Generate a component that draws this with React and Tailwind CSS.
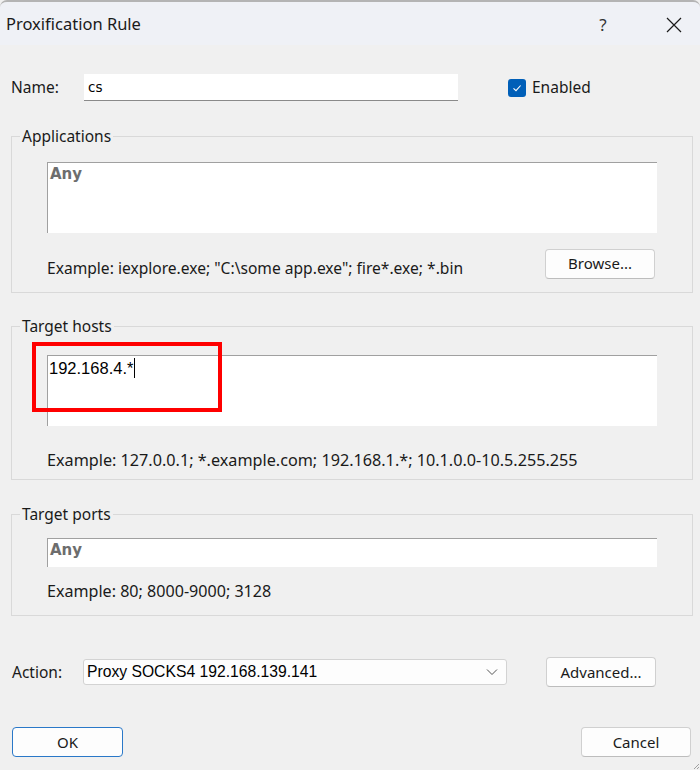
import React from "react";

const ui = { fontFamily: '"Noto Sans", "Open Sans", sans-serif' };
const field = { fontFamily: '"Liberation Sans", Arial, sans-serif' };
const anyF = { fontFamily: '"DejaVu Sans", Verdana, sans-serif' };

function Btn({ children, className = "", primary = false }) {
  return (
    <div
      className={
        "flex items-center justify-center rounded-[4px] bg-[#fdfdfd] text-[15px] text-[#1a1a1a] border " +
        (primary ? "border-[#2a78c8]" : "border-[#d0d0d0] border-b-[#bdbdbd]") +
        " " +
        className
      }
      style={ui}
    >
      {children}
    </div>
  );
}

function Group({ title, className = "", children }) {
  return (
    <fieldset className={"border border-[#d9d9d9] mx-[11px] px-0 " + className}>
      <legend
        className="ml-[8px] px-[2px] text-[15.5px] leading-[20px] text-[#1a1a1a]"
        style={ui}
      >
        {title}
      </legend>
      <div className="px-[35px]">{children}</div>
    </fieldset>
  );
}

function Sunken({ className = "", children }) {
  return (
    <div
      className={
        "bg-white border-t border-l border-t-[#a0a0a0] border-l-[#a0a0a0] " + className
      }
    >
      {children}
    </div>
  );
}

export default function App() {
  return (
    <div className="relative w-[700px] h-[770px] bg-[#f0f0f0] overflow-hidden" style={ui}>
      {/* Title bar */}
      <div className="h-[45px] bg-[#eff1f6] border-t-2 border-[#b4b4b4] rounded-t-[7px] flex items-center">
        <div className="pl-[6px] text-[16.5px] text-[#1a1a1a] flex-1 mt-[2px]" style={ui}>
          Proxification Rule
        </div>
        <div className="w-[20px] text-center text-[17px] text-[#333] mr-[53px] mt-[2px]" style={ui}>
          ?
        </div>
        <svg width="16" height="16" viewBox="0 0 16 16" className="mr-[18px] mt-[2px]">
          <path d="M1 1 L15 15 M15 1 L1 15" stroke="#1a1a1a" strokeWidth="1.2" fill="none" />
        </svg>
      </div>

      {/* Name row */}
      <div className="flex items-center mt-[29px] h-[27px]">
        <div className="pl-[11px] w-[84px] text-[15.5px] text-[#1a1a1a]">Name:</div>
        <div
          className="w-[374px] h-[27px] bg-white border-b border-[#8a8a8a] flex items-center pl-[4px] text-[13.5px] text-black"
          style={{ fontFamily: '"DejaVu Sans", Tahoma, sans-serif' }}
        >
          cs
        </div>
        <div className="ml-[50px] flex items-center gap-[6px]">
          <div className="w-[18px] h-[18px] rounded-[3px] bg-[#005fb8] flex items-center justify-center">
            <svg width="12" height="12" viewBox="0 0 12 12">
              <path d="M2.5 6.3 L5 8.6 L9.6 3.5" stroke="white" strokeWidth="1.1" fill="none" />
            </svg>
          </div>
          <div className="text-[15.5px] text-[#1a1a1a]">Enabled</div>
        </div>
      </div>

      {/* Applications */}
      <Group title="Applications" className="mt-[25px] h-[167px]">
        <Sunken className="mt-[16px] h-[71px] w-[610px]">
          <div className="pl-[2px] pt-[2px] text-[15px] font-bold text-[#6d6d6d] leading-[18px]" style={anyF}>
            Any
          </div>
        </Sunken>
        <div className="flex items-center justify-between mt-[14px]">
          <div className="text-[15.6px] text-[#1a1a1a] mt-[10px]">
            Example: iexplore.exe; "C:\some app.exe"; fire*.exe; *.bin
          </div>
          <Btn className="w-[110px] h-[30px] mr-[2px]">Browse...</Btn>
        </div>
      </Group>

      {/* Target hosts */}
      <Group title="Target hosts" className="mt-[23px] h-[164px]">
        <Sunken className="mt-[19px] h-[71px] w-[610px]">
          <div className="pl-[1px] pt-[2px] text-[16.5px] text-black leading-[20px] flex items-center" style={field}>
            192.168.4.*
            <span className="inline-block w-[1px] h-[20px] bg-black ml-[1px]" />
          </div>
        </Sunken>
        <div className="text-[16.2px] text-[#1a1a1a] mt-[22px]">
          Example: 127.0.0.1; *.example.com; 192.168.1.*; 10.1.0.0-10.5.255.255
        </div>
      </Group>

      {/* Target ports */}
      <Group title="Target ports" className="mt-[24px] h-[112px]">
        <Sunken className="mt-[14px] h-[29px] w-[610px]">
          <div className="pl-[2px] pt-[2px] text-[15px] font-bold text-[#6d6d6d] leading-[18px]" style={anyF}>
            Any
          </div>
        </Sunken>
        <div className="text-[16.1px] text-[#1a1a1a] mt-[12px]">Example: 80; 8000-9000; 3128</div>
      </Group>

      {/* Action row */}
      <div className="flex items-center mt-[41px] h-[30px]">
        <div className="pl-[12px] w-[83px] text-[15.5px] text-[#1a1a1a] mt-[2px]">Action:</div>
        <div className="w-[424px] h-[26px] bg-[#fdfdfd] border border-[#d3d3d3] rounded-[3px] flex items-center pl-[3px] pr-[8px]">
          <div className="flex-1 text-[15.7px] text-black" style={field}>
            Proxy SOCKS4 192.168.139.141
          </div>
          <svg width="12" height="8" viewBox="0 0 12 8">
            <path d="M1 1.5 L6 6.5 L11 1.5" stroke="#555" strokeWidth="1" fill="none" />
          </svg>
        </div>
        <Btn className="ml-[39px] w-[110px] h-[30px]">Advanced...</Btn>
      </div>

      {/* Bottom buttons */}
      <div className="flex items-center justify-between mt-[40px] pl-[12px] pr-[9px]">
        <Btn primary className="w-[111px] h-[30px]">OK</Btn>
        <Btn className="w-[110px] h-[30px]">Cancel</Btn>
      </div>

      {/* Red annotation box */}
      <div className="absolute left-[32px] top-[342px] w-[190px] h-[70px] border-4 border-[#ff0000]" />

      {/* Resize grip */}
      <svg width="8" height="8" viewBox="0 0 8 8" className="absolute right-0 bottom-0">
        <path d="M7 2 L2 7 M7 5 L5 7" stroke="#a0a0a0" strokeWidth="1" fill="none" />
      </svg>
    </div>
  );
}
